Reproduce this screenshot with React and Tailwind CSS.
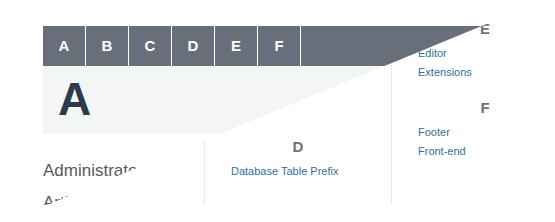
import React from "react";

const letters = ["A", "B", "C", "D", "E", "F"];

function Section({ title, links }) {
  return (
    <div>
      <div className="text-center text-[15px] leading-[20px] font-bold text-[#6e737b]">{title}</div>
      <ul className="mt-[5px] pl-[26px]">
        {links.map((l) => (
          <li key={l} className="text-[11px] leading-[19px] text-[#346e95]">
            {l}
          </li>
        ))}
      </ul>
    </div>
  );
}

export default function App() {
  return (
    <div className="relative w-[555px] h-[222px] overflow-hidden bg-white font-['Liberation_Sans',Arial,sans-serif]">
      {/* lower page */}
      <div className="flex h-[205px] pl-[43px]">
        <div className="w-[161px] shrink-0" />
        <div className="w-[187px] shrink-0 border-l border-[#e8e8e8] pt-[137px]">
          <Section title="D" links={["Database Table Prefix"]} />
        </div>
        <div className="w-[187px] shrink-0 border-l border-[#e8e8e8] pt-[19px] flex flex-col gap-[16px]">
          <Section title="E" links={["Editor", "Extensions"]} />
          <Section title="F" links={["Footer", "Front-end"]} />
        </div>
      </div>

      {/* upper page, cut diagonally */}
      <div className="absolute inset-0 bg-white pt-[26px] pl-[43px] [clip-path:polygon(0_0,545px_0,47px_205px,0_205px)]">
        <div className="flex h-[40px] w-[512px] bg-[#686e7a]">
          {letters.map((l) => (
            <div
              key={l}
              className="flex w-[43px] items-center justify-center border-r border-white text-[15px] font-bold text-white"
            >
              {l}
            </div>
          ))}
        </div>
        <div className="h-[68px] w-[512px] bg-[#f4f5f5] pl-[15px] pt-[10px]">
          <div className="text-[46px] leading-none font-bold text-[#2c3a4c]">A</div>
        </div>
        <div className="pt-[23px] text-[17px] leading-[28px] text-[#555a60]">
          <div>Administrator</div>
          <div className="mt-[4px]">Articles</div>
        </div>
      </div>
    </div>
  );
}
